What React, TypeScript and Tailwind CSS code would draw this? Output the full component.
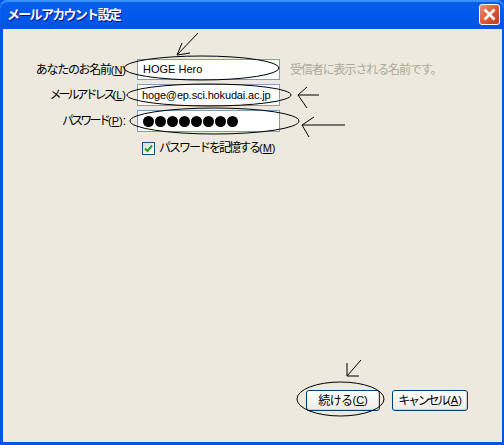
import React from 'react';

const jpFont = "font-['Liberation_Sans','Noto_Sans_CJK_JP',sans-serif]";

const Hotkey = ({ k }: { k: string }) => (
  <span className="text-[11px] tracking-normal">
    (<span className="underline">{k}</span>)
  </span>
);

const Field = ({ label, hotkey, colon, spacing, children, extra, className }: { label: string; hotkey: string; colon?: boolean; spacing: string; children: React.ReactNode; extra?: React.ReactNode; className?: string }) => (
  <div className={`flex items-center ${className ?? ''}`}>
    <label className="w-[122px] pr-[11px] text-right text-[12px] leading-none whitespace-nowrap text-black">
      <span className={spacing}>{label}</span>
      <Hotkey k={hotkey} />
      {colon ? ':' : ''}
    </label>
    <div className="flex h-full w-[143px] items-center border border-[#7f9db9] bg-white pl-[5px] text-[12px] text-black whitespace-nowrap overflow-hidden">
      {children}
    </div>
    {extra}
  </div>
);

const Button = ({ children, className }: { children: React.ReactNode; className?: string }) => (
  <button className={`flex h-[21px] items-center justify-center rounded-[3px] border border-[#003c74] bg-gradient-to-b from-white to-[#ecebe5] text-[12px] text-black shadow-[inset_-1px_-1px_0_#d6d0c5] ${className ?? ''}`}>
    {children}
  </button>
);

export default function App() {
  return (
    <div className={`relative flex h-[445px] w-[504px] flex-col overflow-hidden bg-[#0055e5] ${jpFont}`}>
      {/* title bar */}
      <div className="flex h-[29px] shrink-0 items-center justify-between rounded-t-[7px] bg-gradient-to-b from-[#0a5fe8] via-[#0058ee] to-[#0353e0] pl-[7px] pr-[4px] shadow-[inset_0_2px_1px_#3a93ff]">
        <span className="text-[13px] font-bold tracking-[-1.7px] text-white [text-shadow:1px_1px_0_#0f1089]">メールアカウント設定</span>
        <div className="flex h-[21px] w-[21px] items-center justify-center rounded-[3px] border border-white bg-gradient-to-br from-[#e8906f] via-[#dc5a35] to-[#c23a18]">
          <svg width="13" height="13" viewBox="0 0 13 13">
            <path d="M1.5 1.5 L11.5 11.5 M11.5 1.5 L1.5 11.5" stroke="#fff" strokeWidth="2.6" />
          </svg>
        </div>
      </div>

      {/* client area */}
      <div className="mb-[3px] ml-[3px] mr-[2px] flex flex-1 flex-col bg-[#ede9de] pl-[12px] pt-[30px]">
        <Field
          label="あなたのお名前"
          hotkey="N"
          spacing="tracking-[-1.3px]"
          className="h-[21px]"
          extra={<span className="ml-[10px] text-[12px] tracking-[-1.1px] whitespace-nowrap text-[#aca899]">受信者に表示される名前です。</span>}
        >
          <span className="text-[11px]">HOGE Hero</span>
        </Field>
        <Field label="メールアドレス" hotkey="L" spacing="tracking-[-3px]" className="mt-[4px] h-[22px]">
          <span className="-ml-[1px] text-[11px] tracking-[-0.15px]">hoge@ep.sci.hokudai.ac.jp</span>
        </Field>
        <Field label="パスワード" hotkey="P" colon spacing="tracking-[-2.8px]" className="mt-[4px] h-[22px]">
          <div className="flex gap-[1px]">
            {[0, 1, 2, 3, 4, 5, 6, 7].map(i => (
              <span key={i} className="h-[11px] w-[11px] rounded-full bg-black" />
            ))}
          </div>
        </Field>
        <div className="ml-[127px] mt-[7px] flex items-center">
          <span className="flex h-[13px] w-[13px] items-center justify-center border border-[#1c5180] bg-gradient-to-br from-[#dcdcd7] to-white">
            <svg width="9" height="9" viewBox="0 0 9 9">
              <path d="M1 4.5 L3.5 7 L8 1.5" fill="none" stroke="#21a121" strokeWidth="2" />
            </svg>
          </span>
          <span className="ml-[4px] text-[12px] whitespace-nowrap text-black">
            <span className="tracking-[-2px]">パスワードを記憶する</span>
            <Hotkey k="M" />
          </span>
        </div>

        <div className="mb-[31px] mr-[34px] mt-auto flex justify-end gap-[12px]">
          <Button className="w-[74px]">
            <span className="tracking-[-0.6px]">続ける</span>
            <Hotkey k="C" />
          </Button>
          <Button className="w-[76px]">
            <span className="tracking-[-2.2px]">キャンセル</span>
            <Hotkey k="A" />
          </Button>
        </div>
      </div>

      {/* hand-drawn annotations over the dialog */}
      <svg className="pointer-events-none absolute inset-0" width="504" height="445" viewBox="0 0 504 445" fill="none" stroke="#000" strokeWidth="1">
        <ellipse cx="201.5" cy="68" rx="77.5" ry="12" />
        <ellipse cx="209" cy="95" rx="82" ry="11" />
        <ellipse cx="214.5" cy="121" rx="84.5" ry="13" />
        <ellipse cx="340.5" cy="399" rx="43.5" ry="17" />
        <path d="M198 33 L177 55 M182 43 L177 55 L190 53" />
        <path d="M319 95 L298 95 M307 87 L298 95 L307 108" />
        <path d="M345 125 L302 125 M314 117 L302 125 L309 137" />
        <path d="M361 360 L347 376 M347 363 L347 376 L359 376" />
      </svg>
    </div>
  );
}
